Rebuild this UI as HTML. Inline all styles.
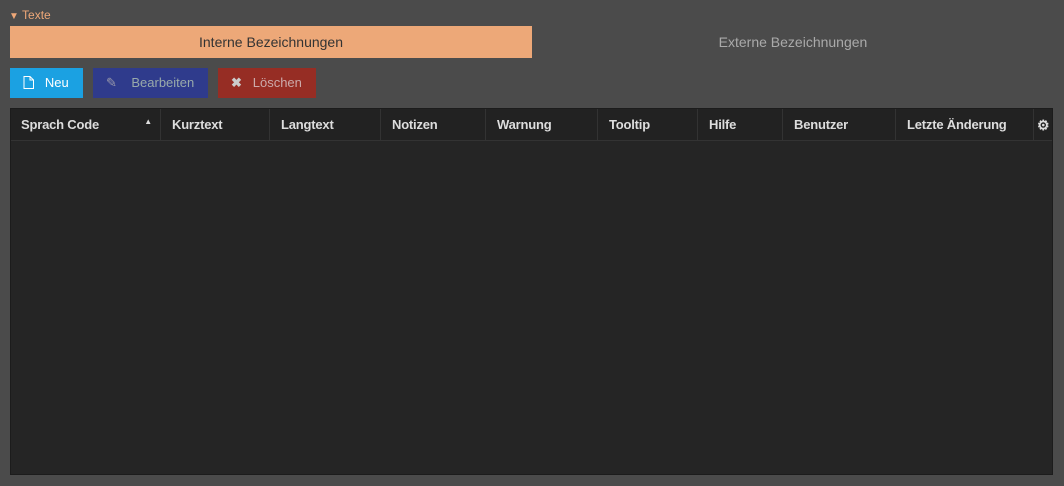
<html><head><style>
body{margin:0;width:1064px;height:486px;background:#4b4b4b;font-family:"Liberation Sans",sans-serif;position:relative;overflow:hidden}
.a{position:absolute}
.btn{position:absolute;top:68px;height:30px;font-size:13px;line-height:30px;box-sizing:border-box}
.th{position:absolute;top:0;height:31px;line-height:32px;font-size:13px;font-weight:bold;color:#ddd;border-right:1px solid #333;box-sizing:border-box;padding-left:11px;letter-spacing:-0.2px}
</style></head><body>
<div class="a" style="left:9px;top:8px;font-size:12px;color:#eea878"><span style="font-size:10px">&#9660;</span> Texte</div>
<div class="a" style="left:10px;top:26px;width:522px;height:32px;background:#eda878;color:#333;font-size:14px;text-align:center;line-height:32px">Interne Bezeichnungen</div>
<div class="a" style="left:532px;top:26px;width:522px;height:32px;color:#aaa;font-size:14px;text-align:center;line-height:32px">Externe Bezeichnungen</div>
<div class="btn" style="left:10px;width:73px;background:#1ba1e2;color:#fff;padding-left:13px"><svg width="11" height="13" style="vertical-align:-2px"><path d="M1 .5h6l3.5 3.5v8.5h-9.5z M7 .5v3.5h3.5" fill="none" stroke="#fff"/></svg>&nbsp;&nbsp;&nbsp;Neu</div>
<div class="btn" style="left:93px;width:115px;background:#2f3b8c;color:#9aa;padding-left:13px"><span style="color:#99a">&#9998;</span>&nbsp;&nbsp;&nbsp;&nbsp;Bearbeiten</div>
<div class="btn" style="left:218px;width:98px;background:#962d24;color:#caa;padding-left:13px"><b style="color:#ccc">&#10006;</b>&nbsp;&nbsp;&nbsp;Löschen</div>
<div class="a" style="left:10px;top:108px;width:1043px;height:367px;background:#252525;border:1px solid #1c1c1c;box-sizing:border-box">
<div class="a" style="left:0;top:0;width:1041px;height:31px;background:#222;border-bottom:1px solid #333">
<div class="th" style="left:0;width:150px;padding-left:10px">Sprach Code<span style="position:absolute;right:8px;top:-3px;font-size:8px">&#9650;</span></div>
<div class="th" style="left:150px;width:109px">Kurztext</div>
<div class="th" style="left:259px;width:111px">Langtext</div>
<div class="th" style="left:370px;width:105px">Notizen</div>
<div class="th" style="left:475px;width:112px">Warnung</div>
<div class="th" style="left:587px;width:100px">Tooltip</div>
<div class="th" style="left:687px;width:85px">Hilfe</div>
<div class="th" style="left:772px;width:113px">Benutzer</div>
<div class="th" style="left:885px;width:138px">Letzte Änderung</div>
<div class="th" style="left:1023px;width:18px;padding-left:3px;border:none;font-size:14px">&#9881;</div>
</div></div>
</body></html>
